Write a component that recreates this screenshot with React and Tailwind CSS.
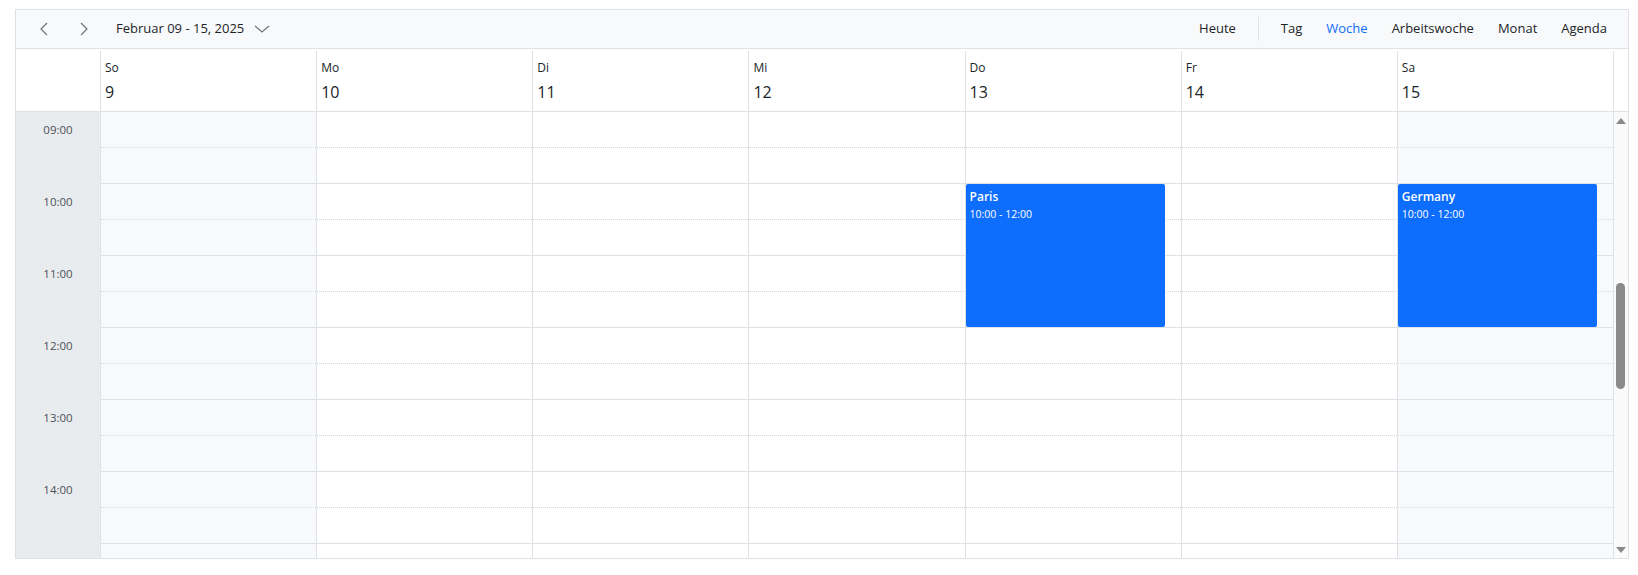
import React from "react";

const days = [
  { name: "So", date: 9, off: true },
  { name: "Mo", date: 10 },
  { name: "Di", date: 11 },
  { name: "Mi", date: 12 },
  { name: "Do", date: 13, event: { title: "Paris", time: "10:00 - 12:00" } },
  { name: "Fr", date: 14 },
  { name: "Sa", date: 15, off: true, event: { title: "Germany", time: "10:00 - 12:00" } },
];

const hours = ["09:00", "10:00", "11:00", "12:00", "13:00", "14:00", "15:00"];
const views = ["Tag", "Woche", "Arbeitswoche", "Monat", "Agenda"];

function Chevron({ dir }) {
  return (
    <svg width="10" height="14" viewBox="0 0 10 14" fill="none" stroke="#6c757d" strokeWidth="1.2">
      {dir === "left" ? <path d="M8 1 L2 7 L8 13" /> : <path d="M2 1 L8 7 L2 13" />}
    </svg>
  );
}

function Toolbar() {
  return (
    <div className="h-[39px] bg-[#f8f9fa] border-b border-[#dee2e6] flex items-center text-[13px] text-[#212529]">
      <button className="ml-[8px] w-[40px] h-[30px] flex items-center justify-center">
        <Chevron dir="left" />
      </button>
      <button className="w-[40px] h-[30px] flex items-center justify-center">
        <Chevron dir="right" />
      </button>
      <div className="ml-[12px] flex items-center">
        <span>Februar 09 - 15, 2025</span>
        <svg className="ml-[10px]" width="16" height="8" viewBox="0 0 16 8" fill="none" stroke="#6c757d" strokeWidth="1.2">
          <path d="M1 1 L8 7 L15 1" />
        </svg>
      </div>
      <div className="ml-auto mr-[9px] flex items-center">
        <span className="px-3">Heute</span>
        <div className="mx-[10px] w-px h-[24px] bg-[#dee2e6]" />
        {views.map((v) => (
          <span key={v} className={v === "Woche" ? "px-3 text-[#0d6efd]" : "px-3"}>
            {v}
          </span>
        ))}
      </div>
    </div>
  );
}

function Header() {
  return (
    <div className="flex h-[63px] border-b border-[#dee2e6] pt-[2px]">
      <div className="w-[85px] border-r border-[#dee2e6]" />
      {days.map((d) => (
        <div key={d.date} className="flex-1 border-r border-[#dee2e6] pl-[4px] text-[#212529]">
          <div className="text-[12px] mt-[8px] leading-[18px]">{d.name}</div>
          <div className="text-[16px] mt-[4px] leading-[22px]">{d.date}</div>
        </div>
      ))}
      <div className="w-[14px]" />
    </div>
  );
}

function Scrollbar() {
  return (
    <div className="relative w-[14px] h-full bg-[#fafafa]">
      <div className="absolute left-[2px] top-[6px] w-0 h-0 border-x-[5px] border-x-transparent border-b-[6px] border-b-[#8a8a8a]" />
      <div className="absolute left-[2px] top-[171px] w-[9px] h-[106px] rounded-full bg-[#8a8a8a]" />
      <div className="absolute left-[2px] bottom-[5px] w-0 h-0 border-x-[5px] border-x-transparent border-t-[6px] border-t-[#8a8a8a]" />
    </div>
  );
}

function Content() {
  return (
    <div className="flex h-[446px] overflow-hidden">
      <div className="w-[85px] bg-[#e9ecef] border-r border-[#dee2e6] shrink-0">
        {hours.map((h) => (
          <div key={h} className="h-[72px]">
            <div className="h-[36px] flex items-center justify-center text-[11.5px] text-[#495057]">{h}</div>
          </div>
        ))}
      </div>
      {days.map((d) => (
        <div key={d.date} className={`relative flex-1 border-r border-[#dee2e6] ${d.off ? "bg-[#f8f9fa]" : "bg-white"}`}>
          {hours.map((h) => (
            <div key={h}>
              <div className="h-[36px] border-b border-dotted border-[#d6d9dc]" />
              <div className="h-[36px] border-b border-[#dee2e6]" />
            </div>
          ))}
          {d.event && (
            <div className="absolute left-0 right-[16px] top-[72px] h-[143px] bg-[#0d6efd] rounded-[2px] px-[4px] pt-[4px] text-white">
              <div className="text-[12px] font-semibold leading-[18px]">{d.event.title}</div>
              <div className="text-[10.5px] leading-[16px]">{d.event.time}</div>
            </div>
          )}
        </div>
      ))}
      <Scrollbar />
    </div>
  );
}

export default function App() {
  return (
    <div className="w-[1638px] h-[575px] bg-white pt-[9px] pl-[15px]" style={{ fontFamily: '"Open Sans", "Noto Sans", sans-serif' }}>
      <div className="w-[1614px] h-[550px] border border-[#dee2e6] flex flex-col">
        <Toolbar />
        <Header />
        <Content />
      </div>
    </div>
  );
}
